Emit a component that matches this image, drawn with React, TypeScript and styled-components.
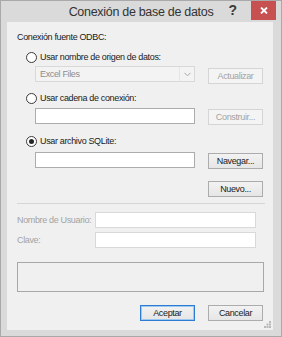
import React from 'react'
import styled, { createGlobalStyle } from 'styled-components'

const GlobalStyle = createGlobalStyle`
  html, body {
    margin: 0;
    padding: 0;
    background: #ffffff;
  }
  body {
    font-family: "Liberation Sans", Arial, sans-serif;
  }
`

const Window = styled.div`
  width: 282px;
  height: 337px;
  box-sizing: border-box;
  border: 1px solid #a9a9a9;
  background: #dadada;
  display: flex;
  flex-direction: column;
`

const TitleBar = styled.div`
  height: 21px;
  flex-shrink: 0;
  display: grid;
  grid-template-columns: 1fr auto 1fr;
  align-items: start;
`

const Title = styled.div`
  grid-column: 2;
  font-size: 12.5px;
  letter-spacing: -0.3px;
  line-height: 23px;
  color: #333333;
  white-space: nowrap;
`

const Controls = styled.div`
  grid-column: 3;
  justify-self: end;
  display: flex;
  align-items: flex-start;
  padding-right: 5px;
`

const HelpGlyph = styled.span`
  font-size: 14px;
  font-weight: bold;
  line-height: 16px;
  color: #3a3a3a;
  margin-right: 14px;
  margin-top: 1px;
`

const CloseButton = styled.div`
  width: 25px;
  height: 19px;
  background: #c75050;
  display: flex;
  align-items: center;
  justify-content: center;
`

const Client = styled.div`
  flex: 1;
  margin: 0 8px 6px 6px;
  background: #f0f0f0;
  display: flex;
  flex-direction: column;
  padding: 0 10px;
  font-size: 9px;
  letter-spacing: -0.35px;
  color: #1a1a1a;
  white-space: nowrap;
  position: relative;
`

const Heading = styled.div`
  margin-top: 9px;
  line-height: 12px;
`

const RadioRow = styled.label<{ top: number }>`
  margin-top: ${p => p.top}px;
  margin-left: 9px;
  height: 12px;
  display: flex;
  align-items: center;
  gap: 3px;
  line-height: 12px;
`

const RadioCircle = styled.span<{ checked?: boolean }>`
  width: 11px;
  height: 11px;
  box-sizing: border-box;
  border-radius: 50%;
  border: 1px solid #3a3a3a;
  background: #ffffff;
  display: flex;
  align-items: center;
  justify-content: center;
  &::after {
    content: '';
    display: ${p => (p.checked ? 'block' : 'none')};
    width: 5px;
    height: 5px;
    border-radius: 50%;
    background: #262626;
  }
`

const FieldRow = styled.div<{ top: number }>`
  margin-top: ${p => p.top}px;
  margin-left: 18px;
  display: grid;
  grid-template-columns: 160px 55px;
  column-gap: 13px;
  align-items: start;
`

const ComboBox = styled.div`
  height: 16px;
  box-sizing: border-box;
  border: 1px solid #d9d9d9;
  background: #f3f3f3;
  display: flex;
  align-items: center;
  padding-left: 4px;
  color: #8c8c8c;
`

const ComboText = styled.span`
  flex: 1;
`

const ComboArrow = styled.span`
  width: 14px;
  height: 14px;
  border-left: 1px solid #e6e6e6;
  display: flex;
  align-items: center;
  justify-content: center;
`

const TextBox = styled.div<{ disabled?: boolean }>`
  height: 16px;
  box-sizing: border-box;
  border: 1px solid ${p => (p.disabled ? '#d9d9d9' : '#acacac')};
  background: #ffffff;
`

const Button = styled.div<{ disabled?: boolean; primary?: boolean; offset?: number }>`
  margin-top: ${p => p.offset ?? 0}px;
  width: 55px;
  height: 16px;
  box-sizing: border-box;
  border: 1px solid ${p => (p.primary ? '#2d7bd3' : p.disabled ? '#d5d5d5' : '#acacac')};
  box-shadow: ${p => (p.primary ? 'inset 0 0 0 1px #9cc8f2' : 'none')};
  background: ${p =>
    p.disabled ? '#f4f4f4' : 'linear-gradient(#f2f2f2, #e6e6e6)'};
  color: ${p => (p.disabled ? '#a3a3a3' : '#1a1a1a')};
  display: flex;
  align-items: center;
  justify-content: center;
  line-height: 12px;
`

const RightButtons = styled.div<{ top: number }>`
  margin-top: ${p => p.top}px;
  display: flex;
  justify-content: flex-end;
  gap: 13px;
`

const Separator = styled.div`
  margin-top: 6px;
  height: 1px;
  background: #d5d5d5;
  margin-right: -2px;
`

const CredRow = styled.div<{ top: number }>`
  margin-top: ${p => p.top}px;
  display: grid;
  grid-template-columns: 78px 161px;
  align-items: center;
`

const DisabledLabel = styled.span`
  color: #a3a3a3;
  line-height: 12px;
`

const MessageBox = styled.div`
  margin-top: 14px;
  height: 30px;
  box-sizing: border-box;
  border: 1px solid #a8a8a8;
  background: #f0f0f0;
  margin-right: -1px;
`

const Grip = styled.svg`
  position: absolute;
  right: 2px;
  bottom: 2px;
`

function Chevron() {
  return (
    <svg width="7" height="5" viewBox="0 0 7 5">
      <path d="M0.5 0.8 L3.5 3.8 L6.5 0.8" fill="none" stroke="#a8a8a8" strokeWidth="1" />
    </svg>
  )
}

function CloseIcon() {
  return (
    <svg width="8" height="7" viewBox="0 0 8 7">
      <path d="M1 0.5 L7 6.5 M7 0.5 L1 6.5" stroke="#ffffff" strokeWidth="1.8" />
    </svg>
  )
}

export default function App() {
  return (
    <>
      <GlobalStyle />
      <Window>
        <TitleBar>
          <Title>Conexión de base de datos</Title>
          <Controls>
            <HelpGlyph>?</HelpGlyph>
            <CloseButton>
              <CloseIcon />
            </CloseButton>
          </Controls>
        </TitleBar>

        <Client>
          <Heading>Conexión fuente ODBC:</Heading>

          <RadioRow top={8}>
            <RadioCircle />
            Usar nombre de origen de datos:
          </RadioRow>
          <FieldRow top={3}>
            <ComboBox>
              <ComboText>Excel Files</ComboText>
              <ComboArrow>
                <Chevron />
              </ComboArrow>
            </ComboBox>
            <Button disabled offset={2}>Actualizar</Button>
          </FieldRow>

          <RadioRow top={8}>
            <RadioCircle />
            Usar cadena de conexión:
          </RadioRow>
          <FieldRow top={4}>
            <TextBox />
            <Button disabled offset={1}>Construir...</Button>
          </FieldRow>

          <RadioRow top={10}>
            <RadioCircle checked />
            Usar archivo SQLite:
          </RadioRow>
          <FieldRow top={5}>
            <TextBox />
            <Button offset={1}>Navegar...</Button>
          </FieldRow>
          <RightButtons top={12}>
            <Button>Nuevo...</Button>
          </RightButtons>

          <Separator />

          <CredRow top={8}>
            <DisabledLabel>Nombre de Usuario:</DisabledLabel>
            <TextBox disabled />
          </CredRow>
          <CredRow top={4}>
            <DisabledLabel>Clave:</DisabledLabel>
            <TextBox disabled />
          </CredRow>

          <MessageBox />

          <RightButtons top={13}>
            <Button primary>Aceptar</Button>
            <Button>Cancelar</Button>
          </RightButtons>

          <Grip width="7" height="7" viewBox="0 0 7 7">
            <rect x="5" y="0" width="2" height="2" fill="#b8b8b8" />
            <rect x="2.5" y="2.5" width="2" height="2" fill="#b8b8b8" />
            <rect x="5" y="2.5" width="2" height="2" fill="#b8b8b8" />
            <rect x="0" y="5" width="2" height="2" fill="#b8b8b8" />
            <rect x="2.5" y="5" width="2" height="2" fill="#b8b8b8" />
            <rect x="5" y="5" width="2" height="2" fill="#b8b8b8" />
          </Grip>
        </Client>
      </Window>
    </>
  )
}
